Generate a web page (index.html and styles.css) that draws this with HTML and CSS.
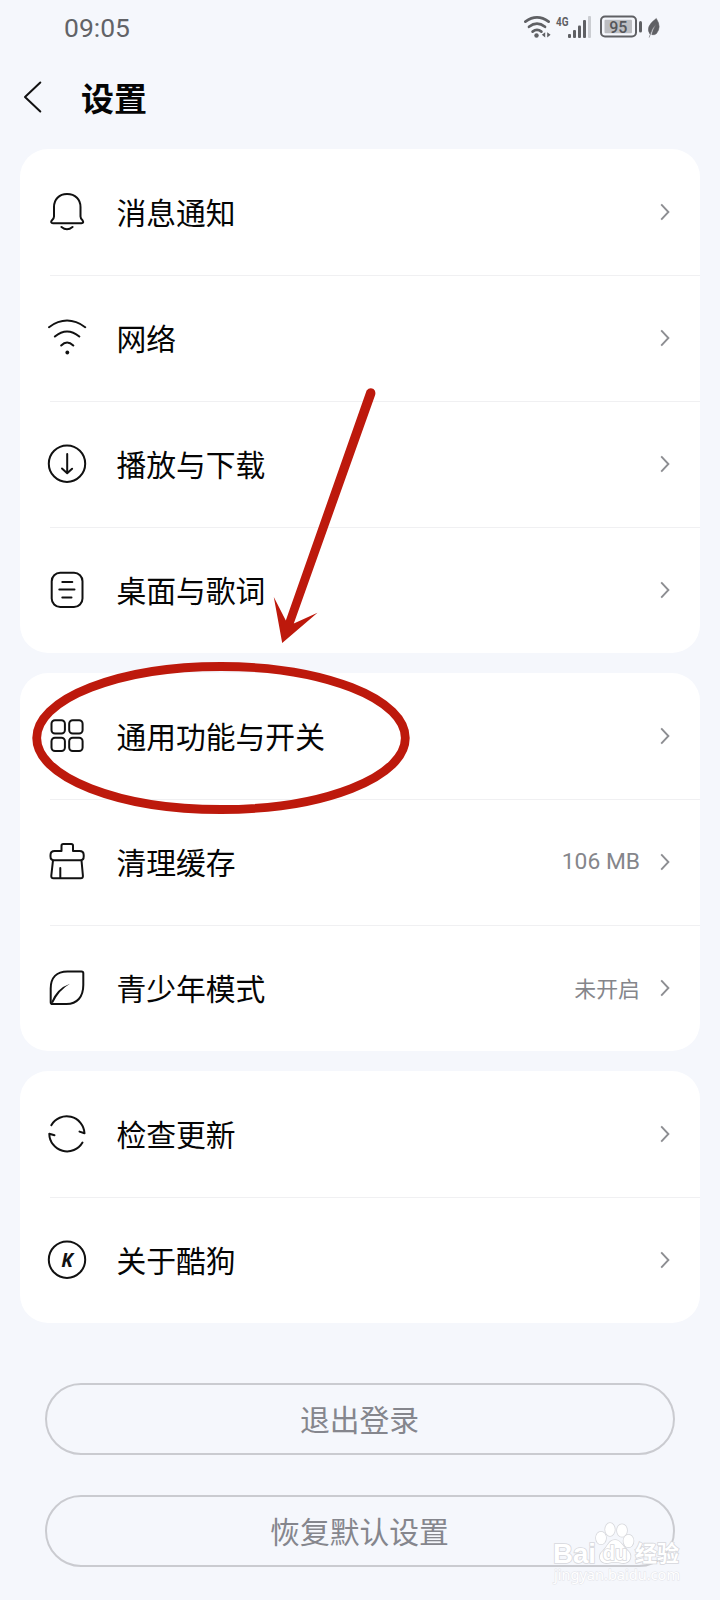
FILE: index.html
```html
<!DOCTYPE html>
<html lang="zh-CN">
<head>
<meta charset="utf-8">
<title>设置</title>
<link rel="stylesheet" href="styles.css">
</head>
<body>
<svg class="defs" width="0" height="0">
  <symbol id="chevron" viewBox="0 0 10 18"><path d="M1.2 1.4 8.4 9l-7.2 7.6"/></symbol>
</svg>
<div class="screen">
  <header class="status">
    <span class="time">09:05</span>
    <svg class="status-icons" width="140" height="26" viewBox="0 0 140 26">
      <g fill="none" stroke="#5f6064" stroke-width="2.7" stroke-linecap="round">
        <path d="M2.4 7.6Q14 -.8 25.6 7.6"/>
        <path d="M6 12.8Q14 6.6 22 12.8"/>
        <path d="M9.6 17.6Q14 14.2 18.4 17.6"/>
      </g>
      <circle cx="13.5" cy="21.5" r="2.2" fill="#5f6064"/>
      <path d="M22.2 18.2v5.2l-3.4-2.6zM24.2 18.2v5.2l3.4-2.6z" fill="#5f6064"/>
      <text class="net" x="33" y="11.5" textLength="12.5" lengthAdjust="spacingAndGlyphs">4G</text>
      <g fill="#5f6064">
        <rect x="45" y="20" width="3" height="4" rx="1"/>
        <rect x="50" y="16" width="3" height="8" rx="1"/>
        <rect x="55" y="11.5" width="3" height="12.5" rx="1"/>
        <rect x="60" y="6" width="3" height="18" rx="1"/>
        <rect x="65" y="2" width="3" height="22" rx="1" opacity=".28"/>
      </g>
      <rect x="78" y="2.5" width="35" height="20" rx="4" fill="none" stroke="#5f6064" stroke-width="2"/>
      <rect x="81.5" y="5.8" width="27.5" height="13.5" rx="1" fill="#bcbdc1"/>
      <text class="charge" x="95.3" y="18.5" text-anchor="middle">95</text>
      <rect x="116" y="7" width="3" height="11.5" rx="1.5" fill="#5f6064"/>
      <path d="M133.3 4.5Q138.8 13 133.5 19.5Q131.5 21.3 128.8 20.6Q130 15.5 133 10.5Q128.5 15 127.3 20.6Q121.5 13 133.3 4.5zM127 21l-.8 2.500" fill="#5f6064" stroke="#5f6064" stroke-width=".6"/>
    </svg>
  </header>

  <div class="titlebar">
    <svg class="back" width="20" height="34" viewBox="0 0 20 34"><path d="M17.3 2.5 2 17l15.300 14.500"/></svg>
    <h1 class="title">设置</h1>
  </div>

  <main class="groups">
    <section class="card">
      <div class="row">
        <svg class="icon" viewBox="0 0 40 40"><path d="M20 2C12 2 7 7.7 7 15V24.5Q7 26.5 5 28.3C3.600 29.8 4 31.2 6 31.2H34.5C36.5 31.2 36.5 29.7 35.5 28.3Q33.5 26.5 33.5 24.5V15C33.5 7.7 28.5 2 20 2zM14.5 35Q20 39.5 25.5 35"/></svg>
        <span class="label">消息通知</span><svg class="chev"><use href="#chevron"/></svg>
      </div>
      <div class="row">
        <svg class="icon" viewBox="0 0 40 40"><path d="M2 9.2Q20 -4 38.2 9.2M7.9 18.5Q20 8.4 32.3 18.5M14.2 27.5Q20 21.6 26.3 27.5"/><circle class="solid" cx="20.3" cy="34.5" r="1.9"/></svg>
        <span class="label">网络</span><svg class="chev"><use href="#chevron"/></svg>
      </div>
      <div class="row">
        <svg class="icon" viewBox="0 0 40 40"><circle cx="20" cy="19.7" r="18.2"/><path d="M20.2 10V29M15 24.5l5.2 4.7 4.9-4.5"/></svg>
        <span class="label">播放与下载</span><svg class="chev"><use href="#chevron"/></svg>
      </div>
      <div class="row">
        <svg class="icon" viewBox="0 0 40 40"><rect x="4.7" y="2.7" width="30.8" height="34.3" rx="8.5"/><path d="M15.3 12H25.3M12.3 19.6H27.5M15.3 27.5H24.5"/></svg>
        <span class="label">桌面与歌词</span><svg class="chev"><use href="#chevron"/></svg>
      </div>
    </section>

    <section class="card">
      <div class="row">
        <svg class="icon" viewBox="0 0 40 40"><rect x="4.5" y="4.2" width="13.4" height="13.3" rx="3.5"/><rect x="22.2" y="4.2" width="13.4" height="13.3" rx="3.5"/><rect x="4.5" y="21.8" width="13.4" height="13.3" rx="3.5"/><rect x="22.2" y="21.8" width="13.4" height="13.3" rx="3.5"/></svg>
        <span class="label">通用功能与开关</span><svg class="chev"><use href="#chevron"/></svg>
      </div>
      <div class="row">
        <svg class="icon" viewBox="0 0 40 40"><path d="M14.5 9V3.7Q14.5 2 16.2 2H24.3Q26 2 26 3.7V9H32.5Q36.7 9 36.7 13V14.5Q36.7 18.3 33.5 18.3H7Q3.5 18.3 3.5 14.5V13Q3.5 9 7.7 9zM6 18.3 4.3 33.5Q4 36.3 6.5 36.3H33.7Q36.2 36.3 35.9 33.5L34.5 18.3M13.3 26V36"/></svg>
        <span class="label">清理缓存</span><span class="value mb">106 MB</span><svg class="chev"><use href="#chevron"/></svg>
      </div>
      <div class="row">
        <svg class="icon" viewBox="0 0 40 40"><path d="M20.5 3.5H34.5Q36.3 3.5 36.3 5.3V17C36.3 29 30 36 19.5 36H5.5Q3.7 36 3.7 34.2V20.5C3.7 10 9.5 3.5 20.5 3.5z"/><path class="solid" d="M4 34.5Q9.5 20.3 23 15.7Q12 22 6 35z"/></svg>
        <span class="label">青少年模式</span><span class="value">未开启</span><svg class="chev"><use href="#chevron"/></svg>
      </div>
    </section>

    <section class="card">
      <div class="row">
        <svg class="icon" viewBox="0 0 40 40"><path d="M4.3 11.2A17.8 17.8 0 0 1 37.5 19.3L32.5 17.6M35.5 28.5A17.8 17.8 0 0 1 2.3 19.7L7.5 21.2"/></svg>
        <span class="label">检查更新</span><svg class="chev"><use href="#chevron"/></svg>
      </div>
      <div class="row">
        <svg class="icon" viewBox="0 0 40 40"><circle cx="20" cy="19.7" r="18.2"/><text class="k" x="20" y="26.7" text-anchor="middle">K</text></svg>
        <span class="label">关于酷狗</span><svg class="chev"><use href="#chevron"/></svg>
      </div>
    </section>
  </main>

  <div class="actions">
    <button class="pill">退出登录</button>
    <button class="pill">恢复默认设置</button>
  </div>

  <svg class="annotation" width="720" height="1600" viewBox="0 0 720 1600">
    <ellipse cx="221" cy="738" rx="184.3" ry="71.5" fill="none" stroke="#bd190c" stroke-width="8.8"/>
    <path d="M366.6 390.5Q369.5 387 373.5 389Q376.5 391.5 374.8 396L293.8 623.5 317.5 612.8 282.2 643 273.8 597 285.8 620.5z" fill="#bd190c"/>
  </svg>

  <svg class="watermark" width="144" height="70" viewBox="0 0 144 70">
    <g class="wm-main">
      <text x="11" y="40.5" textLength="43" lengthAdjust="spacingAndGlyphs">Bai</text>
      <ellipse cx="59" cy="16" rx="5" ry="6.3"/>
      <ellipse cx="68" cy="7.5" rx="4.8" ry="6.5"/>
      <ellipse cx="80" cy="8.5" rx="5" ry="6.3"/>
      <ellipse cx="86.5" cy="19" rx="5" ry="6.3"/>
      <path d="M73 18C67 18 66 24 61 29C55 34 58 42 66 41Q73 39 80 41C88 42 91 34 86 29C80 24 79 18 73 18z"/>
      <text class="wm-du" x="73" y="37.5" text-anchor="middle">du</text>
      <text class="wm-cn" x="93" y="38.5" textLength="44" lengthAdjust="spacingAndGlyphs">经验</text>
    </g>
    <text class="wm-url" x="12" y="57.5" textLength="126" lengthAdjust="spacingAndGlyphs">jingyan.baidu.com</text>
  </svg>
</div>
</body>
</html>
```
FILE: styles.css
```css
* { box-sizing: border-box; }
body {
  margin: 0;
  background: #f5f7fc;
  font-family: "Noto Sans CJK SC", sans-serif;
  color: #050505;
}
.defs { position: absolute; }
.screen {
  position: relative;
  width: 720px;
  height: 1600px;
  overflow: hidden;
}
.status {
  display: flex;
  align-items: center;
  justify-content: space-between;
  height: 54px;
  padding: 0 57px 0 64px;
}
.time {
  font-family: Roboto, sans-serif;
  font-size: 26.5px;
  line-height: 30px;
  color: #626367;
  padding-top: 1px;
}
.status-icons { display: block; }
.net { font: 700 13.5px Roboto, sans-serif; fill: #5f6064; }
.charge { font: 500 16px Roboto, sans-serif; fill: #55565a; }
.titlebar {
  display: flex;
  align-items: center;
  gap: 38px;
  height: 95px;
  padding: 0 0 9px 23px;
}
.back { fill: none; stroke: #111; stroke-width: 2; stroke-linecap: round; stroke-linejoin: round; }
.title { margin: 0; font-size: 33px; line-height: 40px; font-weight: 700; }
.groups {
  display: flex;
  flex-direction: column;
  gap: 20.4px;
  padding: 0 20px;
}
.card { background: #fff; border-radius: 28px; }
.row {
  position: relative;
  display: flex;
  align-items: center;
  height: 125.9px;
  padding: 0 30px 0 27px;
}
.row + .row::before {
  content: "";
  position: absolute;
  left: 30px;
  right: 0;
  top: 0;
  height: 1px;
  background: #f0f0f2;
}
.icon {
  width: 40px;
  height: 40px;
  margin-right: 29.4px;
  fill: none;
  stroke: #111;
  stroke-width: 2;
  stroke-linecap: round;
  stroke-linejoin: round;
}
.icon .solid { fill: #111; stroke: none; }
.k { font: italic 700 19px "Open Sans", sans-serif; fill: #111; stroke: none; }
.label { flex: 1; font-size: 29.8px; line-height: 40px; padding-bottom: 1.6px; }
.value { font-size: 21.9px; line-height: 30px; color: #85868b; margin-right: 20px; }
.mb { font-family: Roboto, sans-serif; font-size: 22.8px; padding-top: 1px; }
.chev { width: 10px; height: 18px; fill: none; stroke: #8d8e92; stroke-width: 1.9; }
.actions {
  display: flex;
  flex-direction: column;
  gap: 40px;
  padding: 60px 45px 0;
}
.pill {
  height: 72px;
  padding: 0 1px 1px 0;
  border: 2px solid #cacbd0;
  border-radius: 36px;
  background: transparent;
  font: 400 29.8px "Noto Sans CJK SC", sans-serif;
  color: #85868d;
}
.annotation { position: absolute; left: 0; top: 0; }
.watermark { position: absolute; left: 542px; top: 1522px; }
.wm-main { fill: #fff; stroke: #d7d8dc; stroke-width: 1.6; paint-order: stroke; }
.wm-main text { font: 700 27px "Liberation Sans", sans-serif; }
.wm-main .wm-du { font-size: 20px; }
.wm-main .wm-cn { font: 700 22px "Noto Sans CJK SC", sans-serif; }
.wm-url { font: 400 14.5px "Noto Sans", sans-serif; fill: #fff; stroke: #e3e4e9; stroke-width: 1; paint-order: stroke; }
```
